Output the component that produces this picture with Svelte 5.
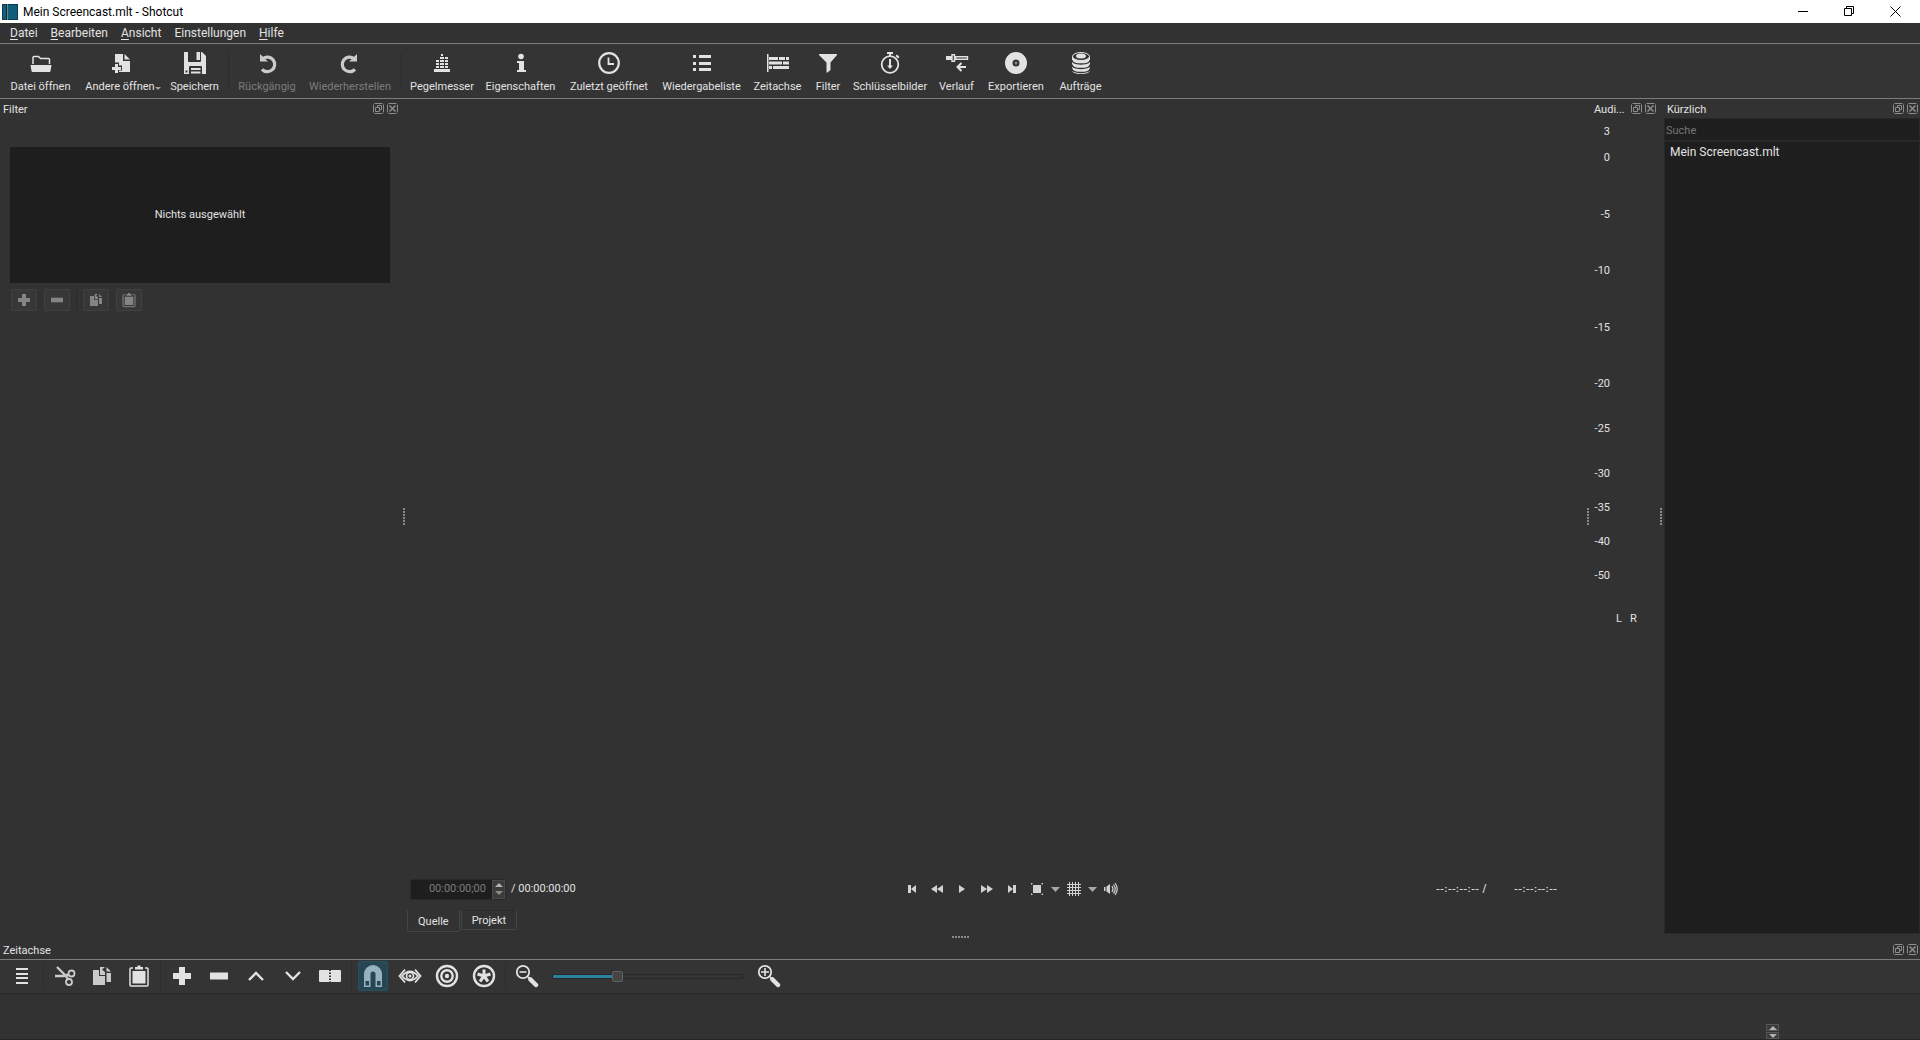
<script>
  const icons = {
    open: '<path d="M4 13V6.500q0-1 1-1h4.500l2 2h8q1 0 1 1V13" fill="none" stroke="currentColor" stroke-width="1.500"/><path d="M1.500 14h21l-1 6q0 1-1 1h-17q-1 0-1-1z"/>',
    other: '<path d="M6 3h8v7h7v11H6z"/><path d="M15.500 3l5.500 5.500h-5.500z"/><path d="M6 11.500h4v3h3v5h-3V23H5v-3.500H2v-5h4z" fill="#343434"/><path d="M6 13h3v3h3v3H9v3H6v-3H3v-3h3z"/>',
    save: '<path fill-rule="evenodd" d="M1 1h4v9q0 1 1 1h11q1 0 1-1V1h1l4 4v18h-4v-7q0-1-1-1H7q-1 0-1 1v7H1zM2.500 19.500v2h2v-2z"/><path d="M13.500 1H17v8h-3.500zM8 17h9.500v2H8zM8 20.500h9.500v2H8z"/>',
    undo: '<path d="M7 18.300A7.300 7.300 0 1 0 8 7.500" fill="none" stroke="currentColor" stroke-width="3.200"/><path d="M5 3v7.500h8z"/>',
    redo: '<g transform="matrix(-1 0 0 1 24 0)"><path d="M7 18.300A7.300 7.300 0 1 0 8 7.500" fill="none" stroke="currentColor" stroke-width="3.200"/><path d="M5 3v7.500h8z"/></g>',
    peak: '<path d="M4 18h16v3H4zM6 15h3v2H6zM10 15h4v2h-4zM15 15h3v2h-3zM6 12h3v2H6zM10 12h4v2h-4zM15 12h3v2h-3zM6 9h3v2H6zM10 9h4v2h-4zM15 9h3v2h-3zM10 6h4v2h-4zM15 6h3v2h-3zM11 3h2v2h-2z"/>',
    info: '<circle cx="12" cy="5.500" r="2.800"/><path d="M8 10h7v9h2v2H8v-2h2v-7H8z"/>',
    clock: '<circle cx="12" cy="12" r="9.800" fill="none" stroke="currentColor" stroke-width="2.200"/><path d="M11.500 6.500v6.500H17" fill="none" stroke="currentColor" stroke-width="1.800"/>',
    list: '<path d="M3 4h3v3H3zM9 4h12v3H9zM3 11h3v3H3zM9 11h12v3H9zM3 17h3v3H3zM9 17h12v3H9z"/>',
    timeline: '<path d="M1 3h1.500v18H1zM3 6h9v3H3zM13 6h6v3h-6zM20 6h3v3h-3zM3 10.500h13v3H3zM17 10.500h6v3h-6zM3 15h3v3H3zM7 15h16v3H7z"/>',
    filter: '<path d="M3 3h18v1l-6.500 7.500V19l-3 2.500h-1v-10L3 4z"/>',
    keyframes: '<circle cx="12" cy="13.500" r="8.300" fill="none" stroke="currentColor" stroke-width="1.800"/><path d="M9 1h6v2H9zM11 2h2v3h-2zM17.500 5l1.500-1.500L21.500 6 20 7.500zM11 8h2v6.500h2L12 18l-3-3.500h2z"/>',
    history: '<path d="M1 5h6v4H1z"/><path d="M7 3.700h2.500v6.600H7zM10.500 5.700h12v2.600h-12z" fill="none" stroke="currentColor" stroke-width="1.400"/><path d="M16.500 12l-4 4 4 4M13 16h8" fill="none" stroke="currentColor" stroke-width="2"/>',
    disc: '<path fill-rule="evenodd" d="M12 1a11 11 0 1 0 0 22a11 11 0 1 0 0-22M12 8.500a3.500 3.500 0 1 1 0 7a3.500 3.500 0 1 1 0-7"/><circle cx="12" cy="12" r="1.500" opacity=".45"/>',
    jobs: '<path d="M3 5v14q0 4 9 4t9-4V5z"/><ellipse cx="12" cy="5.500" rx="8.500" ry="4" fill="#343434" stroke="currentColor"/><ellipse cx="12" cy="5" rx="5" ry="2.500"/><path d="M3 9q0 4 9 4t9-4M3 13.500q0 4 9 4t9-4M3 17.500q0 4 9 4t9-4" fill="none" stroke="#343434" stroke-width="1.300"/>',
    menu: '<path d="M6 4h12v2H6zM6 9h12v2H6zM6 13h12v2H6zM6 18h12v2H6z"/>',
    cut: '<g fill="none" stroke="currentColor"><circle cx="18.500" cy="9.500" r="3" stroke-width="1.800"/><circle cx="16" cy="18" r="3" stroke-width="1.800"/><path d="M2 12h9l5-1.500M15 15l-2.500-3.500L4 3" stroke-width="2.400"/></g>',
    copy: '<path d="M3 6h6v6h6v9H3z"/><path d="M10 3h5l-3 2.500L15 8v3h-5zM16.500 3l4.500 4.500h-4.500zM16.500 9H21v9h-4.500z"/>',
    paste: '<path d="M6 4H4q-1 0-1 1v16q0 1 1 1h16q1 0 1-1V5q0-1-1-1h-2" fill="none" stroke="currentColor" stroke-width="1.500"/><path d="M8 3h2.500V1.500h3V3H16v2.500H8z"/><path d="M5.500 7h13v12.500h-13z"/>',
    plus: '<path d="M9 3h6v6h6v6h-6v6H9v-6H3V9h6z"/>',
    minus: '<path d="M3 8.500h18v7H3z"/>',
    up: '<path d="M5 16l7-7 7 7" fill="none" stroke="currentColor" stroke-width="2.400"/>',
    down: '<path d="M5 8l7 7 7-7" fill="none" stroke="currentColor" stroke-width="2.400"/>',
    split: '<path d="M2 6h9v12H2q-1 0-1-1V7q0-1 1-1zM13 6h9q1 0 1 1v10q0 1-1 1h-9z"/><path d="M12 7v12" stroke="currentColor" stroke-width="2" stroke-dasharray="1.500 1.500" fill="none"/>',
    magnet: '<path fill-rule="evenodd" d="M3 23V10a9 9 0 0 1 18 0v13h-6.500V10a2.500 2.500 0 0 0-5 0v13zM4.500 17v4.500h3.500V17zM16 17v4.500h3.500V17z"/>',
    eye: '<g fill="none" stroke="currentColor"><path d="M7 5.500L1.500 12 7 18.500M17 5.500l5.500 6.500-5.500 6.500" stroke-width="1.800"/><path d="M4 12q8-9 16 0q-8 9-16 0z" stroke-width="1.800"/><circle cx="12" cy="12" r="3.500" stroke-width="1.700"/></g><circle cx="12" cy="12" r="1.500"/>',
    ripple: '<g fill="none" stroke="currentColor" stroke-width="2.400"><circle cx="12" cy="12" r="10"/><circle cx="12" cy="12" r="5.700"/></g><circle cx="12" cy="12" r="2.200"/>',
    rippleAll: '<circle cx="12" cy="12" r="10" fill="none" stroke="currentColor" stroke-width="2.400"/><path d="M12 5.500V12M5.500 10l6.500 2M18.500 10L12 12M8 17.500l4-5.500M16 17.500L12 12" stroke="currentColor" stroke-width="3" fill="none"/>',
    zoomOut: '<g fill="none" stroke="currentColor"><circle cx="8" cy="8" r="6.200" stroke-width="1.800"/><path d="M4.500 8h7" stroke-width="1.600"/><path d="M13 13l2 2" stroke-width="1.800"/><path d="M15.500 15.500l5.500 5.500" stroke-width="4.500" stroke-linecap="round"/></g>',
    zoomIn: '<g fill="none" stroke="currentColor"><circle cx="8" cy="8" r="6.200" stroke-width="1.800"/><path d="M4 8h8M8 4v8" stroke-width="1.600"/><path d="M13 13l2 2" stroke-width="1.800"/><path d="M15.500 15.500l5.500 5.500" stroke-width="4.500" stroke-linecap="round"/></g>',
    first: '<path d="M8 8h3v8H8zM16 8v8l-5-4z"/>',
    rewind: '<path d="M12 8v8l-6-4zM18 8v8l-6-4z"/>',
    play: '<path d="M9 8v8l6-4z"/>',
    forward: '<path d="M6 8v8l6-4zM12 8v8l6-4z"/>',
    last: '<path d="M13 8h3v8h-3zM8 8v8l5-4z"/>',
    fit: '<path d="M8 8h8v8H8zM6 6h2L6 8zM18 6v2l-2-2zM6 18v-2l2 2zM18 18h-2l2-2z"/>',
    grid: '<path d="M7.500 5v14M10.500 5v14M13.500 5v14M16.500 5v14M5 7.500h14M5 10.500h14M5 13.500h14M5 16.500h14" stroke="currentColor" fill="none"/>',
    volume: '<path d="M5 10h1.500v4H5zM7.500 9.500L11 7v10l-3.500-2.500z"/><g fill="none" stroke="currentColor" stroke-width="1.200"><path d="M13 9q2 3 0 6M14.500 7.500q3.500 4.500 0 9M16 6q4.500 6 0 12"/></g>'
  };

  const menus = [['D', 'atei'], ['B', 'earbeiten'], ['A', 'nsicht'], ['', 'Einstellungen'], ['H', 'ilfe']];

  const tools = [
    { icon: 'open', label: 'Datei öffnen' },
    { icon: 'other', label: 'Andere öffnen', menu: true },
    { icon: 'save', label: 'Speichern' },
    null,
    { icon: 'undo', label: 'Rückgängig', disabled: true },
    { icon: 'redo', label: 'Wiederherstellen', disabled: true },
    null,
    { icon: 'peak', label: 'Pegelmesser' },
    { icon: 'info', label: 'Eigenschaften' },
    { icon: 'clock', label: 'Zuletzt geöffnet' },
    { icon: 'list', label: 'Wiedergabeliste' },
    { icon: 'timeline', label: 'Zeitachse' },
    { icon: 'filter', label: 'Filter' },
    { icon: 'keyframes', label: 'Schlüsselbilder' },
    { icon: 'history', label: 'Verlauf' },
    { icon: 'disc', label: 'Exportieren' },
    { icon: 'jobs', label: 'Aufträge' }
  ];

  const filterTools = [
    [['plus', 'Filter hinzufügen'], ['minus', 'Filter entfernen']],
    [['copy', 'Filter kopieren'], ['paste', 'Filter einfügen']]
  ];

  const transport = [
    ['first', 'Zum Anfang'], ['rewind', 'Zurückspulen'], ['play', 'Wiedergabe'],
    ['forward', 'Vorspulen'], ['last', 'Zum Ende'], ['fit', 'Zoom'],
    ['more', 'Zoomstufen'], ['grid', 'Raster'], ['more', 'Rasteroptionen'], ['volume', 'Lautstärke']
  ];

  const levels = ['3', '0', '-5', '-10', '-15', '-20', '-25', '-30', '-35', '-40', '-50'];

  const timelineTools = [
    [['menu', 'Menü']],
    [['cut', 'Ausschneiden'], ['copy', 'Kopieren'], ['paste', 'Einfügen']],
    [['plus', 'Anhängen'], ['minus', 'Entfernen'], ['up', 'Anheben'], ['down', 'Überschreiben'], ['split', 'Teilen']],
    [['magnet', 'Einrasten'], ['eye', 'Scrubbing'], ['ripple', 'Ripple'], ['rippleAll', 'Ripple alle Spuren']]
  ];

  let zoom = $state(33);
  let snap = $state(true);
  let position = $state('00:00:00;00');
  let search = $state('');
</script>

{#snippet icon(name)}
  <svg class="icon" viewBox="0 0 24 24" fill="currentColor" aria-hidden="true">{@html icons[name]}</svg>
{/snippet}

{#snippet dockTitle(title)}
  <header class="dock-title">
    <h2>{title}</h2>
    <button class="dock-btn" aria-label="{title} abdocken">
      <svg viewBox="0 0 11 11" fill="none" stroke="currentColor">
        <path d="M1.500.500h8M1.500 10.500h8M.500 1.500v8M10.500 1.500v8" />
        <path d="M2.500 4.500h4v4h-4zM4.500 4V2.500h4v4H7" />
      </svg>
    </button>
    <button class="dock-btn" aria-label="{title} schließen">
      <svg viewBox="0 0 11 11" fill="none" stroke="currentColor">
        <path d="M1.500.500h8M1.500 10.500h8M.500 1.500v8M10.500 1.500v8" />
        <path d="M2.500 2.500l6 6M8.500 2.500l-6 6" stroke-width="1.600" />
      </svg>
    </button>
  </header>
{/snippet}

{#snippet spinButtons(what)}
  <button aria-label="{what} erhöhen"><svg viewBox="0 0 8 4"><path d="M0 4l4-4 4 4z" /></svg></button>
  <button aria-label="{what} verringern"><svg viewBox="0 0 8 4"><path d="M0 0l4 4 4-4z" /></svg></button>
{/snippet}

<div class="window">
  <div class="titlebar">
    <svg class="logo" viewBox="0 0 16 16" aria-hidden="true">
      <path d="M0 0h16v16H0z" fill="#125f7c" />
      <path d="M.500.500h15v15H.500z" fill="none" stroke="#0a3b4e" />
      <path d="M4 0h2v16H4z" fill="#0b2a38" />
      <path d="M5 0h1v16H5z" fill="#6f858d" />
    </svg>
    <h1>Mein Screencast.mlt - Shotcut</h1>
    <button aria-label="Minimieren"><svg viewBox="0 0 11 11"><path d="M0 5.500h10" /></svg></button>
    <button aria-label="Verkleinern"><svg viewBox="0 0 11 11"><path d="M.500 2.500h7v7h-7zM2.500 2V.500h7v7H8" /></svg></button>
    <button aria-label="Schließen"><svg viewBox="0 0 11 11"><path d="M.500.500l10 10M10.500.500l-10 10" /></svg></button>
  </div>

  <nav class="menubar">
    {#each menus as [key, rest]}
      <button>{#if key}<u>{key}</u>{/if}{rest}</button>
    {/each}
  </nav>

  <div class="toolbar" role="toolbar" aria-label="Hauptwerkzeuge">
    {#each tools as tool}
      {#if tool}
        <button class="tool" disabled={tool.disabled}>
          {@render icon(tool.icon)}
          <span class:has-menu={tool.menu}>{tool.label}</span>
        </button>
      {:else}
        <i class="divider"></i>
      {/if}
    {/each}
  </div>

  <main class="workspace">
    <section class="dock">
      {@render dockTitle('Filter')}
      <div class="filter-body">
        <div class="empty">Nichts ausgewählt</div>
        <div class="filter-tools">
          {#each filterTools as group}
            <div class="filter-group">
              {#each group as [name, label]}
                <button disabled aria-label={label}>{@render icon(name)}</button>
              {/each}
            </div>
          {/each}
        </div>
      </div>
    </section>

    <div class="grip"></div>

    <section class="player">
      <div class="video"></div>
      <div class="controls">
        <div class="time">
          <div class="spin">
            <input bind:value={position} aria-label="Position" />
            <div class="spin-buttons">{@render spinButtons('Position')}</div>
          </div>
          <span>/ 00:00:00:00</span>
        </div>
        <div class="transport">
          {#each transport as [name, label]}
            {#if name === 'more'}
              <button class="more" aria-label={label}><svg viewBox="0 0 9 5"><path d="M0 0h9L4.500 5z" /></svg></button>
            {:else}
              <button aria-label={label}>{@render icon(name)}</button>
            {/if}
          {/each}
        </div>
        <div class="selection"><span>--:--:--:-- /</span><span>--:--:--:--</span></div>
      </div>
      <div class="tabs" role="tablist">
        <button class="tab active" role="tab" aria-selected="true">Quelle</button>
        <button class="tab" role="tab" aria-selected="false">Projekt</button>
      </div>
    </section>

    <div class="grip"></div>

    <section class="dock audio">
      {@render dockTitle('Audi...')}
      <ul class="levels">
        {#each levels as level}<li>{level}</li>{/each}
      </ul>
      <div class="channels"><span>L</span><span>R</span></div>
    </section>

    <div class="grip"></div>

    <section class="dock recent">
      {@render dockTitle('Kürzlich')}
      <input class="search" placeholder="Suche" aria-label="Suche" bind:value={search} />
      <ul class="files"><li>Mein Screencast.mlt</li></ul>
    </section>
  </main>

  <div class="grip wide"></div>

  <section class="timeline">
    {@render dockTitle('Zeitachse')}
    <div class="timeline-tools" role="toolbar" aria-label="Zeitachse">
      {#each timelineTools as group}
        <div class="group">
          {#each group as [name, label]}
            {#if name === 'magnet'}
              <button class:on={snap} aria-label={label} aria-pressed={snap} onclick={() => (snap = !snap)}>{@render icon(name)}</button>
            {:else}
              <button class:soft={name === 'cut' || name === 'copy'} aria-label={label}>{@render icon(name)}</button>
            {/if}
          {/each}
        </div>
      {/each}
      <div class="group zoom">
        <button aria-label="Verkleinern">{@render icon('zoomOut')}</button>
        <input type="range" min="0" max="100" bind:value={zoom} style:--fill="{zoom}%" aria-label="Zoom der Zeitachse" />
        <button aria-label="Vergrößern">{@render icon('zoomIn')}</button>
      </div>
    </div>
    <div class="tracks">
      <div class="stepper">{@render spinButtons('Spur')}</div>
    </div>
  </section>
</div>

<style>
  :global(body) { background: #323232; }
  .window {
    min-height: 100vh;
    display: flex;
    flex-direction: column;
    box-sizing: border-box;
    background: #323232;
    color: #e2e2e2;
    font: 11px/16px Roboto, "Liberation Sans", sans-serif;
  }
  .window * { box-sizing: border-box; }
  h1, h2, ul { margin: 0; padding: 0; font: inherit; list-style: none; }
  button, input { font: inherit; color: inherit; margin: 0; padding: 0; border: 0; background: none; border-radius: 0; outline: 0; }
  svg { display: block; }
  .icon { width: 24px; height: 24px; flex: none; }

  .titlebar { display: flex; align-items: center; height: 23px; padding: 0 2px; background: #fff; color: #000; font-size: 12px; }
  .titlebar h1 { flex: 1; padding-left: 5px; }
  .titlebar button { width: 46px; height: 21px; display: grid; place-items: center; }
  .titlebar button svg { width: 11px; height: 11px; fill: none; stroke: #000; }
  .logo { width: 16px; height: 16px; }

  .menubar { display: flex; gap: 13px; height: 21px; padding: 0 10px; border-bottom: 1px solid #7b7b7b; font-size: 12px; }
  .menubar u { text-underline-offset: 2px; }

  .toolbar {
    display: grid;
    grid-template-columns: 75px 86px 61px 7px 70px 96px 7px 74px 83px 94px 91px 61px 40px 84px 49px 70px 59px;
    height: 55px;
    padding: 7px 3px 0;
    background: #343434;
    border-bottom: 1px solid #7b7b7b;
  }
  .tool { display: flex; flex-direction: column; align-items: center; gap: 4px; white-space: nowrap; }
  .tool:disabled { color: #7c7c7c; }
  .tool:disabled .icon { color: #cbcbcb; }
  .has-menu { padding-left: 4px; }
  .has-menu::after {
    content: "";
    display: inline-block;
    border: 3px solid transparent;
    border-top-color: #a0a0a0;
    border-bottom: 0;
  }
  .divider { width: 1px; height: 36px; margin: 2px 3px; background: #2c2c2c; }

  .workspace { flex: 1; display: grid; grid-template-columns: 400px 7px minmax(0, 1fr) 7px 66px 7px 256px; }
  .dock { display: flex; flex-direction: column; min-width: 0; }
  .dock-title { display: flex; align-items: center; gap: 3px; height: 19px; padding: 0 2px 0 3px; }
  .dock-title h2 { flex: 1; padding-top: 2px; white-space: nowrap; }
  .dock-btn { color: #8c8c8c; }
  .dock-btn svg { width: 11px; height: 11px; }
  .audio .dock-title { padding-right: 1px; }

  .grip { display: grid; place-items: center; }
  .grip::before { content: ""; width: 2px; height: 17px; background: repeating-linear-gradient(#8a8a8a 0 2px, transparent 2px 3px); }
  .grip.wide { height: 6px; }
  .grip.wide::before { width: 17px; height: 2px; background: repeating-linear-gradient(90deg, #8a8a8a 0 2px, transparent 2px 3px); }

  .filter-body { padding: 29px 10px 0; }
  .empty { display: grid; place-items: center; height: 136px; background: #1e1e1e; }
  .filter-tools { display: flex; padding: 6px 1px; }
  .filter-group { display: flex; gap: 7px; }
  .filter-group + .filter-group { margin-left: 6px; padding-left: 6px; border-left: 1px solid #2a2a2a; }
  .filter-group button { display: grid; place-items: center; width: 26px; height: 22px; border: 1px solid #404040; border-radius: 2px; background: #373737; color: #848484; }
  .filter-group .icon { width: 16px; height: 16px; }

  .player { display: flex; flex-direction: column; min-width: 0; }
  .video { flex: 1; }
  .controls { display: flex; justify-content: space-between; align-items: center; height: 24px; padding: 0 27px 0 3px; }
  .time, .selection { display: flex; align-items: center; gap: 5px; }
  .selection { gap: 28px; font-family: "DejaVu Sans", sans-serif; }
  .spin { display: flex; width: 96px; height: 21px; border: 1px solid #292929; border-radius: 2px; background: #1e1e1e; }
  .spin input { flex: 1; min-width: 0; padding-right: 6px; text-align: right; color: #7c7c7c; }
  .spin-buttons { display: grid; width: 13px; border: 1px solid #4a4a4a; background: #3b3b3b; }
  .spin-buttons button { display: grid; place-items: center; }
  .spin-buttons svg, .stepper svg { width: 8px; height: 4px; fill: #b4b4b4; }
  .spin-buttons button + button svg { fill: #8a8a8a; }
  .transport { display: flex; align-items: center; margin-left: 11px; color: #d2d2d2; }
  .transport button { display: grid; place-items: center; width: 25px; }
  .transport .more { width: 12px; }
  .more svg { width: 9px; height: 5px; fill: #a8a8a8; }
  .tabs { display: flex; align-items: flex-start; gap: 1px; height: 33px; padding-top: 9px; }
  .tab { height: 20px; padding: 1px 10px 0; border: 1px solid #454545; border-top-color: #2a2a2a; border-radius: 0 0 2px 2px; }
  .tab.active { height: 22px; border-top-color: transparent; }

  .levels {
    display: grid;
    grid-template-rows: 26px 57px 56px 57px 56px 45px 45px 34px 34px 34px 43px;
    width: 19px;
    padding-top: 6px;
    text-align: right;
  }
  .channels { display: flex; gap: 8px; padding: 0 25px; }

  .search { height: 23px; padding: 1px 1px 0; border: 1px solid #282828; background: #1e1e1e; }
  .search::placeholder { color: #777; opacity: 1; }
  .files { flex: 1; padding: 2px 5px; border: 1px solid #292929; background: #1e1e1e; font-size: 12px; }

  .timeline { display: flex; flex-direction: column; height: 100px; }
  .timeline-tools { display: flex; align-items: flex-start; height: 35px; padding: 1px 0 0 7px; border-top: 1px solid #7b7b7b; border-bottom: 1px solid #272727; background: #343434; }
  .group { display: flex; align-items: center; gap: 7px; }
  .group + .group { margin-left: 6px; padding-left: 6px; border-left: 1px solid #2d2d2d; }
  .group button { display: grid; place-items: center; width: 30px; height: 30px; border-radius: 2px; }
  .group .soft { color: #cacaca; }
  .group .on { border: 1px solid #1f5468; background: #294552; color: #94b2c0; }
  .group.zoom { gap: 10px; }
  .zoom input { appearance: none; width: 192px; height: 13px; }
  .zoom input::-webkit-slider-runnable-track {
    height: 5px;
    border: 1px solid #272727;
    border-radius: 2px;
    background: linear-gradient(90deg, #2a82a1 var(--fill), #343434 var(--fill));
  }
  .zoom input::-webkit-slider-thumb { appearance: none; width: 11px; height: 11px; margin-top: -4px; border: 1px solid #606060; border-radius: 2px; background: #454545; }

  .tracks { flex: 1; display: flex; justify-content: flex-end; align-items: flex-end; padding-right: 141px; border-bottom: 1px solid #262626; }
  .stepper { display: grid; gap: 1px; }
  .stepper button { display: grid; place-items: center; width: 13px; height: 7px; border: 1px solid #575757; background: #3b3b3b; }
</style>
